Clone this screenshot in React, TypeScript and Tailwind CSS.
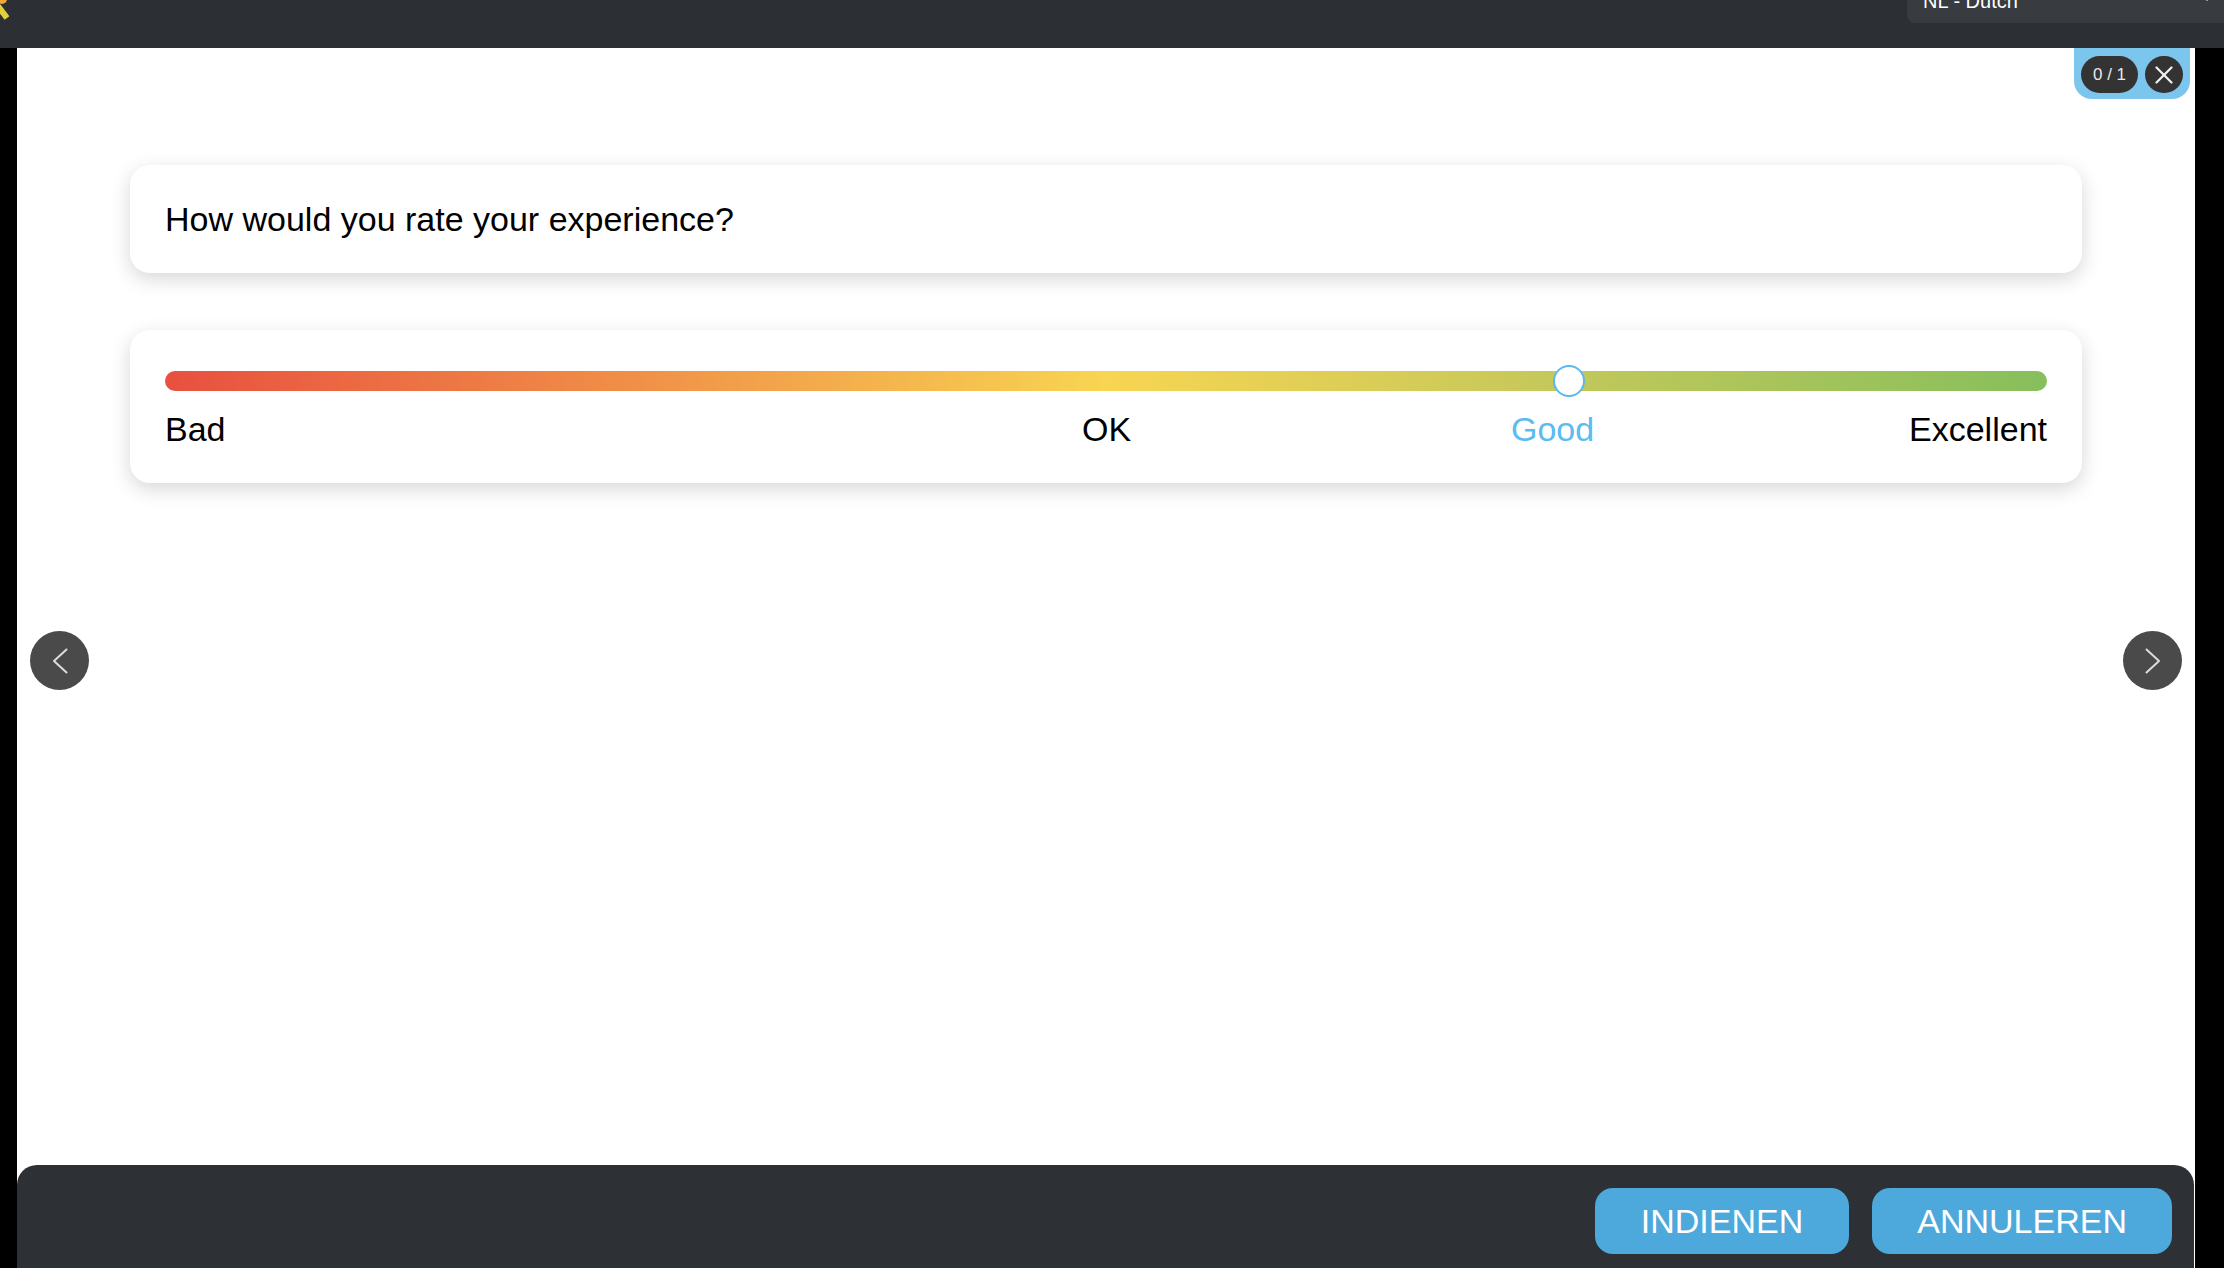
import { X, ChevronDown } from "lucide-react";

const font = { fontFamily: '"Liberation Sans", Arial, sans-serif' };

const Chevron = ({ dir }: { dir: "left" | "right" }) => (
    <svg width="16" height="26" viewBox="0 0 16 26" fill="none">
        <polyline
            points={dir === "left" ? "14.5,1.5 2,13 14.5,24.5" : "1.5,1.5 14,13 1.5,24.5"}
            stroke="#dcdcdc"
            strokeWidth="2"
            strokeLinecap="round"
            strokeLinejoin="round"
        />
    </svg>
);

const TopBar = () => {
    return (
        <div className="flex h-[48px] shrink-0 items-start justify-between bg-[#2c2f34]">
            {/* clipped tool icon */}
            <svg width="14" height="24" viewBox="0 0 14 24" className="shrink-0">
                <line x1="-2" y1="6" x2="7" y2="18" stroke="#e3cf3b" strokeWidth="6" />
                <circle cx="2" cy="-1" r="5" fill="#eea83a" />
            </svg>
            {/* language select, scrolled half out of view */}
            <div className="flex h-[23px] w-[317px] items-end justify-between overflow-hidden rounded-bl-[8px] bg-[#383b40] pl-[16px] pr-[8px]">
                <span className="text-[20px] leading-none text-white mb-[12px]">NL - Dutch</span>
                <ChevronDown className="mb-[16px]" size={18} color="#e5e5e5" strokeWidth={1.5} />
            </div>
        </div>
    );
};

const RatingSlider = () => {
    return (
        <div className="flex h-[153px] flex-col rounded-[20px] bg-white px-[35px] pt-[41px] shadow-[0_6px_20px_rgba(0,0,0,0.16)]">
            <div className="relative h-[20px] rounded-full bg-[linear-gradient(90deg,#e8503f_0%,#f09048_25%,#f8d552_50%,#c8c95a_72%,#86bf5c_100%)]">
                <div className="absolute top-[-6px] left-[calc((100%-32px)*0.75)] h-[32px] w-[32px] rounded-full border-2 border-[#5ab8ee] bg-white"></div>
            </div>
            <div className="relative mt-[21px] h-[34px] text-[34px] leading-none text-black">
                <span className="absolute left-0 top-0">Bad</span>
                <span className="absolute left-[917px] top-0">OK</span>
                <span className="absolute left-[1346px] top-0 text-[#5bbcf0]">Good</span>
                <span className="absolute right-0 top-0">Excellent</span>
            </div>
        </div>
    );
};

const App = () => {
    return (
        <div style={font} className="flex h-[1268px] w-[2224px] flex-col overflow-hidden bg-black">
            <TopBar />
            <div className="flex flex-1">
                <div className="w-[17px] shrink-0 bg-black"></div>
                <div className="relative flex flex-1 flex-col bg-white">
                    {/* counter badge */}
                    <div className="absolute right-[5px] top-0 flex items-start gap-[7px] rounded-b-[18px] bg-[#7cc6ee] px-[7px] pb-[6px] pt-[8px]">
                        <div className="flex h-[37px] w-[57px] items-center justify-center rounded-full bg-[#333333] text-[17px] text-[#e8e8e8]">0 / 1</div>
                        <div className="flex h-[37px] w-[38px] items-center justify-center rounded-full bg-[#333333]">
                            <X size={30} color="#f0f0f0" strokeWidth={1.8} />
                        </div>
                    </div>

                    {/* QUESTION */}
                    <div className="mx-[113px] mt-[117px] flex flex-col gap-[57px]">
                        <div className="flex h-[108px] items-center rounded-[20px] bg-white px-[35px] text-[34px] text-black shadow-[0_6px_20px_rgba(0,0,0,0.16)]">
                            How would you rate your experience?
                        </div>
                        <RatingSlider />
                    </div>

                    {/* NAV ARROWS */}
                    <button className="absolute left-[13px] top-[583px] flex h-[59px] w-[59px] items-center justify-center rounded-full bg-[#4a4a4a]">
                        <Chevron dir="left" />
                    </button>
                    <button className="absolute right-[13px] top-[583px] flex h-[59px] w-[59px] items-center justify-center rounded-full bg-[#4a4a4a]">
                        <Chevron dir="right" />
                    </button>

                    {/* FOOTER */}
                    <div className="mt-auto mr-[1px] flex h-[103px] items-start justify-end gap-[23px] rounded-t-[20px] bg-[#2d3035] pr-[22px] pt-[23px]">
                        <button className="h-[66px] rounded-[18px] bg-[#4da8dc] px-[46px] text-[34px] text-white">INDIENEN</button>
                        <button className="h-[66px] rounded-[18px] bg-[#4da8dc] px-[45px] text-[34px] text-white">ANNULEREN</button>
                    </div>
                </div>
                <div className="w-[29px] shrink-0 bg-black"></div>
            </div>
        </div>
    );
};

export default App;
